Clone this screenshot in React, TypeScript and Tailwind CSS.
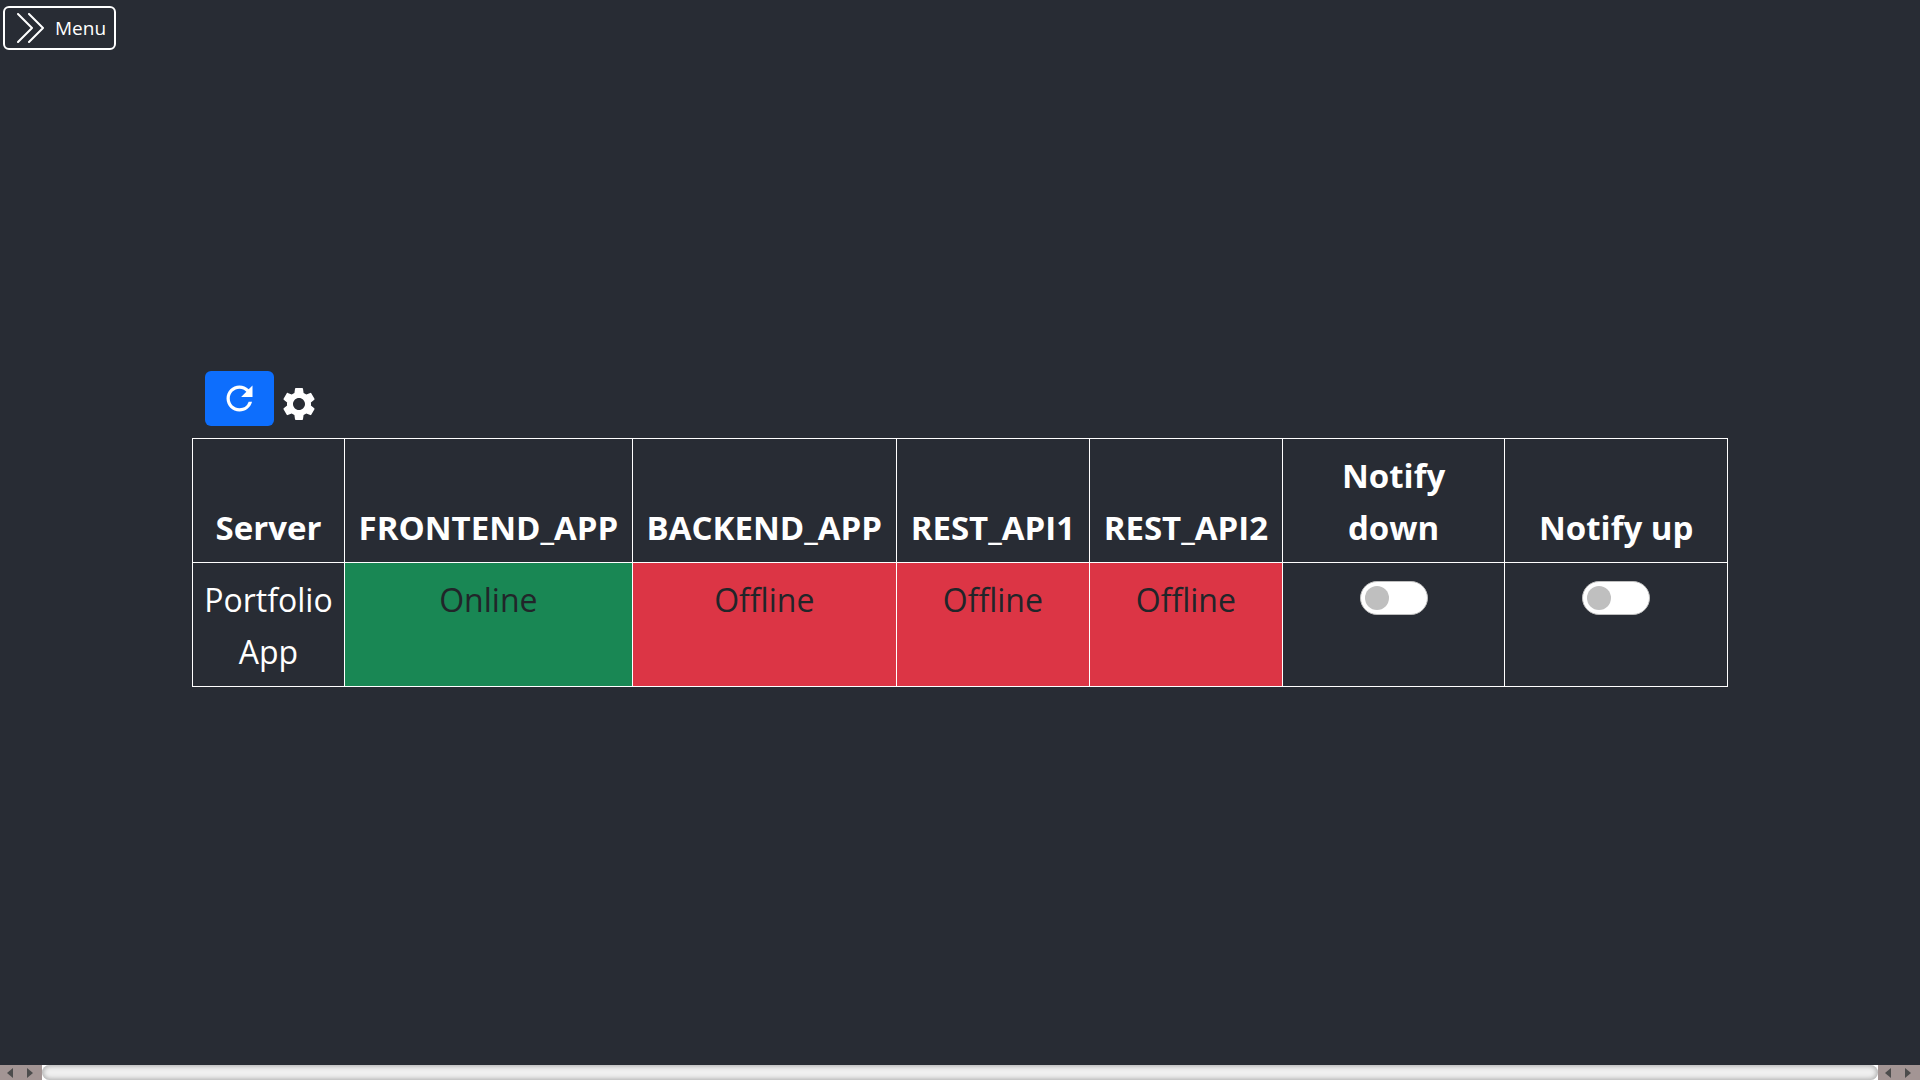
import { useState } from "react";
import { MdRefresh, MdSettings } from "react-icons/md";

type Status = "Online" | "Offline";

const services: { name: string; status: Status }[] = [
  { name: "FRONTEND_APP", status: "Online" },
  { name: "BACKEND_APP", status: "Offline" },
  { name: "REST_API1", status: "Offline" },
  { name: "REST_API2", status: "Offline" },
];

const headCell = "border border-white px-[10px] pt-[11px] pb-2 align-bottom font-bold";
const bodyCell = "border border-white px-[10px] pt-[11px] pb-2 align-top";

function MenuButton() {
  return (
    <button
      type="button"
      className="flex h-11 items-center gap-[10px] rounded-md border-2 border-white pr-2 pl-3 text-[19px] leading-6 text-white"
    >
      <svg viewBox="0 0 28 30" className="h-[30px] w-7" fill="none" stroke="currentColor" strokeWidth="2" strokeLinecap="round" strokeLinejoin="round" aria-hidden="true">
        <path d="M1 1 15 15 1 29M12 1 26 15 12 29" />
      </svg>
      Menu
    </button>
  );
}

function StatusCell({ status }: { status: Status }) {
  return (
    <td className={`${bodyCell} text-[#212529] ${status === "Online" ? "bg-[#198754]" : "bg-[#dc3545]"}`}>
      {status}
    </td>
  );
}

function Switch({ label }: { label: string }) {
  const [on, setOn] = useState(false);
  return (
    <input
      type="checkbox"
      role="switch"
      aria-label={label}
      checked={on}
      onChange={() => setOn(!on)}
      className="mx-auto mt-[7px] flex h-[34px] w-[68px] appearance-none items-center rounded-full border border-[#bfbfbf] bg-white px-1 before:size-6 before:rounded-full before:bg-[#bfbfbf] checked:justify-end checked:bg-[#0d6efd] checked:before:bg-white"
    />
  );
}

function ScrollArrows() {
  return (
    <div className="flex h-full w-[42px] shrink-0 items-center justify-around bg-[#a39594] pr-[2px] text-[#4c4c4c]">
      <svg viewBox="0 0 6 10" className="h-[10px] w-[6px]" fill="currentColor" aria-hidden="true">
        <path d="M6 0v10L0 5z" />
      </svg>
      <svg viewBox="0 0 6 10" className="h-[10px] w-[6px]" fill="currentColor" aria-hidden="true">
        <path d="M0 0v10l6-5z" />
      </svg>
    </div>
  );
}

export default function App() {
  return (
    <div className="flex min-h-screen flex-col bg-[#282c34] font-['Open_Sans','Noto_Sans',sans-serif] text-white">
      <header className="flex h-14 items-start pt-[6px] pl-[3px]">
        <MenuButton />
      </header>

      <main className="flex flex-1 flex-col items-center justify-center pb-16">
        <div className="w-4/5">
          <div className="mb-3 flex items-end gap-[5px] pl-[13px]">
            <button type="button" aria-label="Refresh" className="flex h-[55px] w-[69px] items-center justify-center rounded-md bg-[#0d6efd]">
              <MdRefresh size={39} />
            </button>
            <button type="button" aria-label="Settings" className="pb-[2px]">
              <MdSettings size={40} />
            </button>
          </div>

          <table className="w-full table-fixed border-collapse text-center leading-[52px]">
            <colgroup>
              <col className="w-[9.9%]" />
              <col className="w-[18.75%]" />
              <col className="w-[17.2%]" />
              <col className="w-[12.58%]" />
              <col className="w-[12.57%]" />
              <col className="w-[14.5%]" />
              <col className="w-[14.5%]" />
            </colgroup>
            <thead className="text-[33px]">
              <tr>
                <th scope="col" className={headCell}>Server</th>
                {services.map((s) => (
                  <th key={s.name} scope="col" className={headCell}>{s.name}</th>
                ))}
                <th scope="col" className={headCell}>
                  Notify
                  <br />
                  down
                </th>
                <th scope="col" className={headCell}>Notify up</th>
              </tr>
            </thead>
            <tbody className="text-[32px]">
              <tr>
                <td className={bodyCell}>Portfolio App</td>
                {services.map((s) => (
                  <StatusCell key={s.name} status={s.status} />
                ))}
                <td className={bodyCell}>
                  <Switch label="Notify down for Portfolio App" />
                </td>
                <td className={bodyCell}>
                  <Switch label="Notify up for Portfolio App" />
                </td>
              </tr>
            </tbody>
          </table>
        </div>
      </main>

      <footer className="flex h-[15px] items-center bg-[#a39594]">
        <ScrollArrows />
        <div className="h-full flex-1 bg-white">
          <div className="h-full rounded-full bg-[#f0f0f0] shadow-[inset_0_0_5px_1px_#a8a8a8]" />
        </div>
        <ScrollArrows />
      </footer>
    </div>
  );
}
